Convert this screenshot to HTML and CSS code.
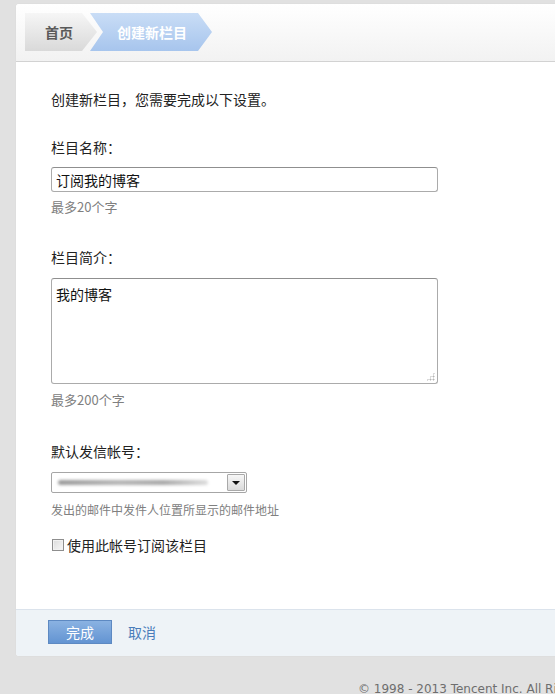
FILE: index.html
```html
<!DOCTYPE html>
<html lang="zh-CN">
<head>
<meta charset="utf-8">
<title>创建新栏目</title>
<link rel="stylesheet" href="styles.css">
</head>
<body>
<div class="page">
  <div class="card">
    <div class="head">
      <div class="crumbs">
        <div class="crumb crumb-home">首页</div>
        <div class="crumb crumb-cur">创建新栏目</div>
      </div>
    </div>
    <div class="body">
      <p class="intro">创建新栏目，您需要完成以下设置。</p>

      <div class="field field-first">
        <div class="label">栏目名称：</div>
        <input class="text" type="text" value="订阅我的博客">
        <div class="hint hint-big">最多20个字</div>
      </div>

      <div class="field field-2">
        <div class="label">栏目简介：</div>
        <div class="area-wrap">
          <textarea class="area">我的博客</textarea>
          <span class="grip"></span>
        </div>
        <div class="hint hint-big hint-area">最多200个字</div>
      </div>

      <div class="field field-3">
        <div class="label">默认发信帐号：</div>
        <div class="select">
          <span class="select-val"><span class="blur"></span></span>
          <span class="select-btn"><span class="tri"></span></span>
        </div>
        <div class="hint hint-sel">发出的邮件中发件人位置所显示的邮件地址</div>
      </div>

      <label class="check">
        <span class="box"></span>
        <span>使用此帐号订阅该栏目</span>
      </label>
    </div>
    <div class="foot">
      <button class="btn-ok" type="button">完成</button>
      <a class="cancel" href="#">取消</a>
    </div>
  </div>
  <div class="copy">© 1998 - 2013 Tencent Inc. All Rights Reserved</div>
</div>
</body>
</html>
```
FILE: styles.css
```css
html, body {
  margin: 0;
  padding: 0;
  overflow: hidden;
  background: #e1e1e1;
}
body {
  font-family: "Noto Sans CJK SC", "Noto Sans", sans-serif;
  color: #222;
}
.page {
  width: 700px;
  padding: 4px 0 0 16px;
}
.card {
  width: 640px;
  background: #fff;
  border-radius: 3px;
  box-shadow: 0 0 1px rgba(0,0,0,0.12);
  overflow: hidden;
}
.head {
  height: 58px;
  border-bottom: 1px solid #d2d2d2;
  background: linear-gradient(#ffffff, #f2f2f2);
  box-sizing: border-box;
  padding: 9px 0 0 9px;
}
.crumbs {
  display: flex;
  height: 38px;
}
.crumb {
  height: 38px;
  display: flex;
  align-items: center;
  font-size: 14px;
  font-weight: bold;
  box-sizing: border-box;
}
.crumb-home {
  width: 72px;
  padding-left: 20px;
  color: #5a5a5a;
  background: linear-gradient(#f6f6f6, #d9d9d9);
  clip-path: polygon(0 0, 57px 0, 100% 50%, 57px 100%, 0 100%);
}
.crumb-cur {
  width: 122px;
  margin-left: -7px;
  padding-left: 27px;
  color: #fff;
  background: linear-gradient(#c9ddf6, #a7c5ed);
  clip-path: polygon(0 0, 108px 0, 100% 50%, 108px 100%, 0 100%, 13px 50%);
}
.body {
  padding: 27px 0 0 35px;
  height: 547px;
  box-sizing: border-box;
}
.intro {
  margin: 0;
  font-size: 14px;
  line-height: 20px;
}
.field-first {
  margin-top: 28px;
}
.field-2 {
  margin-top: 31px;
}
.field-3 {
  margin-top: 32px;
}
.label {
  font-size: 14px;
  line-height: 20px;
  margin-bottom: 11px;
}
.field-first .label {
  margin-bottom: 10px;
}
.text {
  display: block;
  width: 387px;
  height: 25px;
  box-sizing: border-box;
  border: 1px solid #ababab;
  border-top-color: #8f8f8f;
  border-radius: 3px;
  padding: 0 4px;
  font-family: inherit;
  font-size: 14px;
  color: #111;
  outline: none;
  margin: 0;
}
.hint {
  font-size: 12px;
  line-height: 18px;
  color: #808080;
  margin-top: 6px;
}
.hint-big {
  font-size: 13px;
}
.hint-area {
  margin-top: 7px;
}
.area-wrap {
  position: relative;
  width: 387px;
  height: 106px;
}
.area {
  display: block;
  width: 387px;
  height: 106px;
  box-sizing: border-box;
  border: 1px solid #ababab;
  border-top-color: #8f8f8f;
  border-radius: 3px;
  padding: 5px 4px;
  font-family: inherit;
  font-size: 14px;
  line-height: 20px;
  color: #111;
  resize: none;
  outline: none;
  margin: 0;
}
.grip {
  position: absolute;
  right: 3px;
  bottom: 3px;
  width: 9px;
  height: 9px;
  background:
    radial-gradient(circle, #b5b5b5 0.9px, transparent 1.1px) 0 0 / 3px 3px;
  clip-path: polygon(100% 0, 100% 100%, 0 100%);
}
.select {
  display: flex;
  width: 196px;
  height: 21px;
  box-sizing: border-box;
  border: 1px solid #a6a6a6;
  border-radius: 2px;
  background: #fff;
}
.select-val {
  flex: 1;
  display: flex;
  align-items: center;
  padding-left: 6px;
}
.blur {
  display: block;
  width: 150px;
  height: 5px;
  background: linear-gradient(90deg, #9a9a9a, #b5b5b5 40%, #a8a8a8 70%, #dcdcdc);
  filter: blur(1.5px);
  border-radius: 3px;
}
.select-btn {
  width: 16px;
  margin: 1px;
  border: 1px solid #a9a9a9;
  border-radius: 1px;
  background: linear-gradient(#f7f7f7, #dadada);
  display: flex;
  align-items: center;
  justify-content: center;
}
.tri {
  width: 0;
  height: 0;
  border-left: 4px solid transparent;
  border-right: 4px solid transparent;
  border-top: 4px solid #111;
}
.hint-sel {
  margin-top: 8px;
}
.check {
  margin-top: 16px;
  display: flex;
  align-items: center;
  gap: 3px;
  font-size: 14px;
  line-height: 20px;
  padding-left: 1px;
}
.box {
  width: 12px;
  height: 12px;
  box-sizing: border-box;
  border: 1px solid #8e8e8e;
  background: linear-gradient(135deg, #dcdcdc, #f8f8f8);
  box-shadow: inset 0 0 0 1px #f2f2f2;
}
.foot {
  border-top: 1px solid #dbe3ec;
  background: #eef3f7;
  height: 47px;
  box-sizing: border-box;
  padding: 10px 0 0 32px;
  display: flex;
  align-items: flex-start;
  gap: 16px;
}
.btn-ok {
  width: 64px;
  height: 24px;
  border: 1px solid #5d89c2;
  background: linear-gradient(#8ab2e2, #6394d2);
  color: #fff;
  font-family: inherit;
  font-size: 14px;
  padding: 0;
  margin: 0;
  line-height: 20px;
}
.cancel {
  color: #4a7dba;
  font-size: 14px;
  line-height: 24px;
  text-decoration: none;
}
.copy {
  margin: 26px 0 0 342px;
  font-family: "DejaVu Sans", Verdana, sans-serif;
  font-size: 12px;
  line-height: 14px;
  color: #6e6e6e;
  white-space: nowrap;
}
```
